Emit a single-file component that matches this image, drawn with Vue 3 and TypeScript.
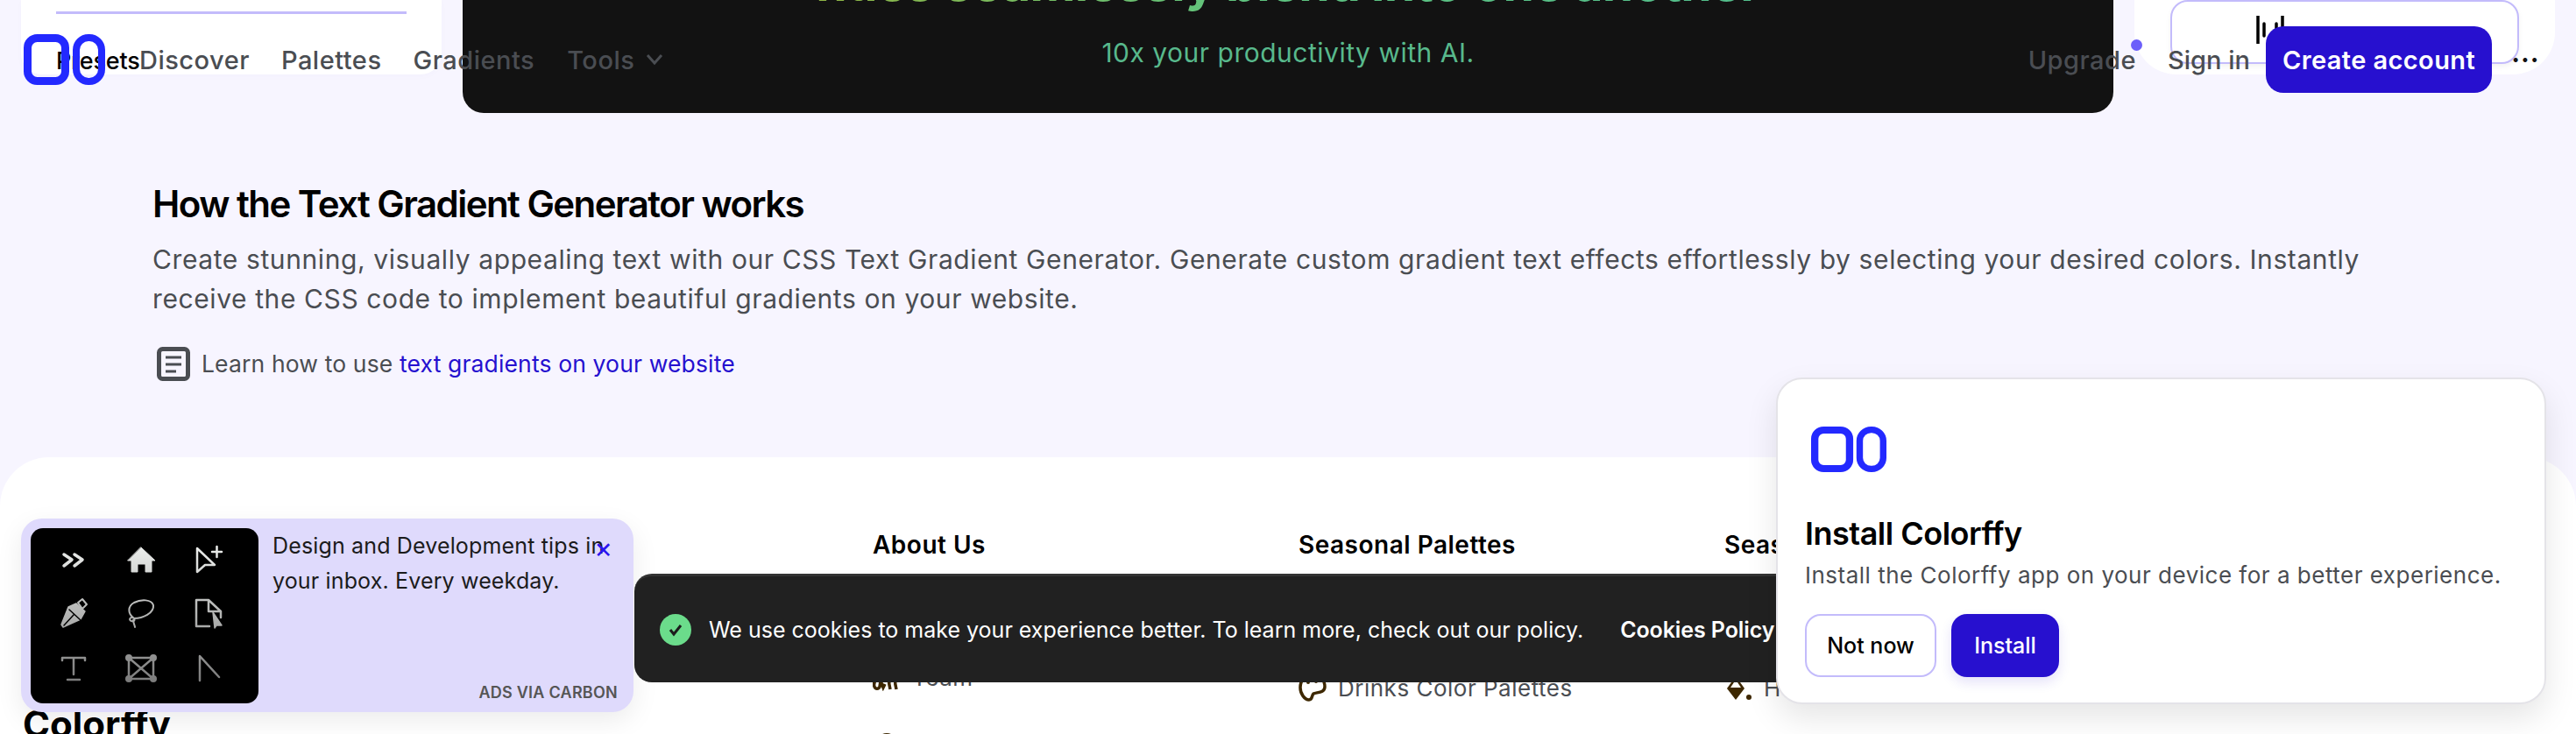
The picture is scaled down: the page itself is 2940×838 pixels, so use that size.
<template>
  <div class="page">
    <div class="top-row">
      <div class="side-card left">
        <div class="divider"></div>
        <span class="presets">Presets</span>
      </div>
      <div class="banner">
        <div class="banner-title">hues seamlessly blend into one another</div>
        <div class="banner-sub">10x your productivity with AI.</div>
      </div>
      <div class="side-card right">
        <button class="outline-btn">
          <svg class="bars" viewBox="0 0 32 32" width="32" height="32">
            <path d="M2 0v32M9 9v14M23 9v14M30 0v22" stroke="#000" stroke-width="3.5" stroke-linecap="round" fill="none" />
          </svg>
          <span>Audio Palette</span>
        </button>
      </div>
    </div>

    <section class="how">
      <h2>How the Text Gradient Generator works</h2>
      <p>
        Create stunning, visually appealing text with our CSS Text Gradient Generator. Generate custom gradient text effects effortlessly by selecting your desired colors. Instantly
        receive the CSS code to implement beautiful gradients on your website.
      </p>
      <div class="learn">
        <svg viewBox="0 0 38 39" width="38" height="39" fill="none" stroke="#4a4d52" stroke-width="5">
          <rect x="2.500" y="2.500" width="33" height="34" rx="4" />
          <path d="M10 12h18M10 20h18M10 28h12" stroke-width="3" />
        </svg>
        <span>Learn how to use <a href="#">text gradients on your website</a></span>
      </div>
    </section>

    <footer class="footer">
      <div class="brand">Colorffy</div>
      <div v-for="col in columns" :key="col.title" class="col" :class="col.cls">
        <h3>{{ col.title }}</h3>
        <ul>
          <li v-for="row in col.rows" :key="row.label">
            <svg viewBox="0 0 32 32" width="32" height="32" v-html="icons[row.icon]"></svg>
            <span>{{ row.label }}</span>
          </li>
        </ul>
      </div>
    </footer>

    <header class="nav">
      <svg viewBox="0 0 93 58" width="93" height="58" fill="none" stroke="#2329ff" stroke-width="9">
        <rect x="4.500" y="4.500" width="43" height="49" rx="11" />
        <rect x="60" y="4" width="29" height="50" rx="14" stroke-width="8" />
      </svg>
      <nav class="links">
        <a v-for="link in links" :key="link" href="#">{{ link }}</a>
        <a href="#" class="tools">
          Tools
          <svg viewBox="0 0 20 14" width="20" height="14" fill="none" stroke="#4a4d52" stroke-width="3">
            <path d="M2 2l8 9 8-9" />
          </svg>
        </a>
      </nav>
      <div class="nav-right">
        <a href="#" class="upgrade">Upgrade<i class="dot"></i></a>
        <a href="#" class="signin">Sign in</a>
        <button class="create">Create account</button>
        <span class="more">···</span>
      </div>
    </header>

    <aside class="ad">
      <div class="ad-image">
        <svg viewBox="0 0 260 200" width="260" height="200" fill="none" stroke="url(#fade)" stroke-width="3" stroke-linecap="round" stroke-linejoin="round">
          <defs>
            <linearGradient id="fade" gradientUnits="userSpaceOnUse" x1="0" y1="20" x2="0" y2="175">
              <stop offset="0" stop-color="#eceeec" />
              <stop offset="1" stop-color="#7c7c7c" />
            </linearGradient>
          </defs>
          <path d="M38 30l9 6-9 7M50 30l9 6-9 7" stroke-width="3.5" />
          <path d="M126 22l16 15h-4v13h-7v-9h-9v9h-7V37h-4z" fill="url(#fade)" stroke-width="1" />
          <path d="M190 23l20 19h-11l-9 8zM207 27h11M212.500 21v12" stroke-width="2.500" />
          <path d="M52 86l-9 4-8 20 2 3 20-9 5-9z" fill="url(#fade)" stroke-width="1.500" />
          <path d="M38 111l11-12M44 93l13 12" stroke="#000" stroke-width="1.500" />
          <path d="M54 85l5-4 5 6-5 5z" stroke-width="2" />
          <path d="M118 103c-8-6-7-14 0-18 8-4 20-4 22 3 1 9-12 15-22 15zM118 103c-4-3-7 2-3 3s4-2 3-3zM117 105c0 3 2 6 2 8" stroke-width="2" />
          <path d="M203 82h-14v30h15M203 82l14 13h-14zM217 95v7" stroke-width="2.500" />
          <path d="M208 96l10 15-6 0-2 3z" fill="url(#fade)" stroke-width="1.500" />
          <path d="M36 151v-3h26v3M49 148v19M42 173h14" stroke-width="2.500" />
          <path d="M112 148h28v24h-28zM112 148l28 24M140 148l-28 24" stroke-width="2.500" />
          <circle cx="112" cy="148" r="2.500" fill="url(#fade)" />
          <circle cx="140" cy="148" r="2.500" fill="url(#fade)" />
          <circle cx="112" cy="172" r="2.500" fill="url(#fade)" />
          <circle cx="140" cy="172" r="2.500" fill="url(#fade)" />
          <path d="M193 174v-28l22 24" stroke-width="2.500" />
        </svg>
      </div>
      <div class="ad-text">Design and Development tips in your inbox. Every weekday.</div>
      <span class="ad-close">×</span>
      <span class="ad-via">ADS VIA CARBON</span>
    </aside>

    <div class="cookie">
      <span class="check">
        <svg viewBox="0 0 20 20" width="20" height="20" fill="none" stroke="#1c1c1c" stroke-width="3">
          <path d="M4 10l4 5 8-10" />
        </svg>
      </span>
      <span class="cookie-text">We use cookies to make your experience better. To learn more, check out our policy.</span>
      <a href="#" class="cookie-link">Cookies Policy</a>
    </div>

    <div class="install">
      <svg class="install-logo" viewBox="0 0 93 58" width="86" height="52" fill="none" stroke="#2329ff" stroke-width="9" preserveAspectRatio="none">
        <rect x="4.500" y="4.500" width="43" height="49" rx="11" />
        <rect x="60" y="4" width="29" height="50" rx="14" stroke-width="8" />
      </svg>
      <h4>Install Colorffy</h4>
      <p>Install the Colorffy app on your device for a better experience.</p>
      <div class="install-actions">
        <button class="later">Not now</button>
        <button class="go">Install</button>
      </div>
    </div>
  </div>
</template>

<script setup lang="ts">
type IconName = 'team' | 'palette' | 'bucket' | 'help'

interface FooterRow {
  label: string
  icon: IconName
}

interface FooterColumn {
  title: string
  cls: string
  rows: FooterRow[]
}

const links = ['Discover', 'Palettes', 'Gradients']

const icons: Record<IconName, string> = {
  team: '<path d="M7 10c-3 8-7 12-5 17 1 3 5 3 6 0l1-7 3 8 2-4M22 10c-3 8-4 11-3 15l1 5M28 10c-2 7-3 11-2 15l1 5" fill="none" stroke="#3d2700" stroke-width="3.500" />',
  palette: '<path d="M16 2C7 2 2 8 2 16c0 7 5 14 10 14 4 0 3-5 5-7 3-2 13 0 13-8C30 7 24 2 16 2z" fill="none" stroke="#3d2700" stroke-width="3.500" /><circle cx="11" cy="10" r="2" fill="#3d2700" /><circle cx="20" cy="9" r="2" fill="#3d2700" />',
  bucket: '<path d="M13 3L3 17l10 13 10-13z" fill="#3d2700" /><path d="M7 16l6-9 6 9z" fill="#fff" /><circle cx="28" cy="27" r="3" fill="#3d2700" />',
  help: '<circle cx="16" cy="16" r="12" fill="#3d2700" />',
}

const columns: FooterColumn[] = [
  {
    title: 'About Us',
    cls: 'about',
    rows: [
      { label: 'Contact', icon: 'help' },
      { label: 'Team', icon: 'team' },
      { label: 'Help & Support', icon: 'help' },
    ],
  },
  {
    title: 'Seasonal Palettes',
    cls: 'seasonal',
    rows: [
      { label: 'Food Color Palettes', icon: 'palette' },
      { label: 'Drinks Color Palettes', icon: 'palette' },
    ],
  },
  {
    title: 'Seasonal Gradients',
    cls: 'seasonal',
    rows: [
      { label: 'Food Gradients', icon: 'bucket' },
      { label: 'Holiday Gradients', icon: 'bucket' },
    ],
  },
]
</script>

<style>
html,
body {
  margin: 0;
  height: 100%;
  overflow: hidden;
  background: #f7f5ff;
}
</style>

<style scoped>
.page {
  position: relative;
  width: 2940px;
  height: 838px;
  overflow: hidden;
  background: #f7f5ff;
  font-family: Inter, "Liberation Sans", sans-serif;
  color: #4a4d52;
}

.top-row {
  display: flex;
  align-items: flex-start;
  gap: 24px;
  height: 129px;
  padding-left: 24px;
}

.side-card {
  height: 85px;
  background: #fff;
  border-radius: 0 0 24px 24px;
  box-sizing: border-box;
}

.side-card.left {
  width: 480px;
  padding: 13px 40px 0;
  box-shadow: 0 2px 8px rgba(40, 20, 160, 0.02);
}

.divider {
  height: 3px;
  background: #c3bbfb;
}

.presets {
  display: block;
  margin-top: 36px;
  font-size: 27px;
  font-weight: 500;
  line-height: 36px;
  letter-spacing: -0.2px;
  color: #000;
}

.side-card.right {
  width: 480px;
  padding: 0 41px;
  border-radius: 0 0 48px 48px;
}

.outline-btn {
  display: flex;
  align-items: flex-start;
  gap: 16px;
  width: 100%;
  height: 73px;
  margin: 0;
  padding: 16px 0 0 96px;
  background: #fff;
  border: 2px solid #c3bbfb;
  border-radius: 20px;
  font: 500 28px/32px Inter, sans-serif;
  color: #000;
  box-sizing: border-box;
  box-shadow: 0 3px 6px rgba(0, 0, 0, 0.05);
}

.outline-btn span {
  margin-top: 8px;
}

.banner {
  width: 1884px;
  height: 129px;
  background: #121212;
  border-radius: 0 0 24px 24px;
  display: flex;
  flex-direction: column;
  align-items: center;
  justify-content: flex-end;
  overflow: hidden;
  padding-bottom: 51px;
  box-sizing: border-box;
}

.banner-title {
  font-size: 57px;
  line-height: 72px;
  font-weight: 700;
  letter-spacing: -0.7px;
  white-space: nowrap;
  background: linear-gradient(90deg, #8fb544, #5fc47f 45%, #52bd8c);
  background-clip: text;
  -webkit-background-clip: text;
  color: transparent;
  margin-bottom: 25px;
}

.banner-sub {
  font-size: 30px;
  line-height: 36px;
  color: #58b98c;
  letter-spacing: 0.5px;
}

.how {
  padding: 81px 174px 0;
}

.how h2 {
  margin: 0;
  font-size: 42px;
  line-height: 46px;
  font-weight: 600;
  letter-spacing: -1.55px;
  color: #000;
}

.how p {
  margin: 18px 0 0;
  font-size: 30px;
  line-height: 45px;
  letter-spacing: 0.6px;
  width: 2600px;
}

.learn {
  display: flex;
  align-items: center;
  gap: 13px;
  margin-top: 32px;
  padding-left: 5px;
  font-size: 26.500px;
  line-height: 39px;
  letter-spacing: 0.14px;
}

.learn a {
  color: #2510cf;
  text-decoration: none;
}

.footer {
  position: relative;
  display: grid;
  grid-template-columns: 970px 486px 486px 1fr;
  align-items: start;
  height: 500px;
  padding: 83px 0 0 26px;
  margin-top: 87px;
  background: #fff;
  border-radius: 56px 56px 0 0;
}

.brand {
  margin-top: 199px;
  font-size: 42px;
  line-height: 46px;
  font-weight: 700;
  letter-spacing: 0;
  color: #000;
}

.col h3 {
  margin: 0;
  font-size: 28px;
  line-height: 34px;
  font-weight: 600;
  letter-spacing: 0.5px;
  color: #000;
}

.col ul {
  list-style: none;
  margin: 0;
  padding: 0;
}

.col li {
  display: flex;
  align-items: center;
  gap: 13px;
  height: 76px;
  font-size: 26px;
  letter-spacing: 0.5px;
}

.about ul {
  padding-top: 20px;
}

.seasonal ul {
  padding-top: 32px;
}

.nav {
  position: absolute;
  top: 30px;
  left: 0;
  right: 0;
  height: 76px;
  display: flex;
  align-items: center;
  padding: 0 29px 0 27px;
  font-size: 29px;
  font-weight: 500;
  letter-spacing: 0.5px;
  color: #4a4d52;
}

.nav a {
  color: inherit;
  text-decoration: none;
}

.links {
  display: flex;
  align-items: center;
  gap: 36px;
  margin-left: 39px;
}

.tools {
  display: flex;
  align-items: center;
  gap: 13px;
  margin-left: 1px;
}

.nav-right {
  margin-left: auto;
  display: flex;
  align-items: center;
}

.upgrade {
  position: relative;
  margin-right: 36px;
}

.dot {
  position: absolute;
  top: -6px;
  right: -7px;
  width: 13px;
  height: 13px;
  border-radius: 50%;
  background: #6c5ffa;
}

.signin {
  margin-right: 18px;
  letter-spacing: 0;
}

.create {
  width: 258px;
  height: 76px;
  padding: 0;
  background: #2710cf;
  border: 0;
  border-radius: 20px;
  color: #fff;
  font: 600 29px/1 Inter, sans-serif;
  letter-spacing: 0.4px;
}

.more {
  width: 45px;
  margin: 0 0 0 22px;
  font-size: 34px;
  line-height: 1;
  color: #111;
}

.ad {
  position: absolute;
  left: 24px;
  top: 592px;
  width: 699px;
  height: 221px;
  padding: 11px 0 0 11px;
  box-sizing: border-box;
  background: #dfdafc;
  border-radius: 24px;
  box-shadow: 0 10px 30px rgba(0, 0, 0, 0.08);
  display: flex;
  gap: 16px;
}

.ad-image {
  width: 260px;
  height: 200px;
  flex: none;
  background: #000;
  border-radius: 14px;
}

.ad-text {
  width: 396px;
  font-size: 25px;
  line-height: 40px;
  color: #1b1b1b;
  letter-spacing: 0.15px;
}

.ad-close {
  position: absolute;
  left: 654px;
  top: 14px;
  color: #2a14f0;
  font-size: 32px;
  line-height: 40px;
}

.ad-via {
  position: absolute;
  right: 18px;
  bottom: 12px;
  font-size: 18px;
  line-height: 20px;
  font-weight: 600;
  letter-spacing: 0.25px;
  color: #555;
}

.cookie {
  position: absolute;
  left: 724px;
  top: 655px;
  width: 1400px;
  height: 124px;
  box-sizing: border-box;
  display: flex;
  align-items: center;
  padding-left: 29px;
  background: #212121;
  border-top: 3px solid #333;
  border-radius: 20px;
  color: #fff;
  font-size: 25px;
}

.check {
  width: 36px;
  height: 36px;
  border-radius: 50%;
  background: #6bdc8b;
  display: flex;
  align-items: center;
  justify-content: center;
}

.cookie-text {
  margin-left: 20px;
  letter-spacing: 0;
  white-space: nowrap;
}

.cookie-link {
  margin-left: 42px;
  color: #fff;
  text-decoration: none;
  font-weight: 600;
  letter-spacing: -0.1px;
  white-space: nowrap;
}

.install {
  position: absolute;
  left: 2027px;
  top: 431px;
  width: 879px;
  height: 373px;
  box-sizing: border-box;
  padding: 54px 31px 0;
  background: #fff;
  border: 2px solid #e4e3e8;
  border-radius: 30px;
  box-shadow: 0 16px 36px rgba(0, 0, 0, 0.1);
}

.install-logo {
  display: block;
  margin-left: 7px;
}

.install h4 {
  margin: 48px 0 0;
  font-size: 36px;
  line-height: 44px;
  font-weight: 600;
  letter-spacing: -0.5px;
  color: #000;
}

.install p {
  margin: 8px 0 0;
  font-size: 26px;
  line-height: 36px;
  letter-spacing: 0.5px;
  white-space: nowrap;
}

.install-actions {
  display: flex;
  gap: 17px;
  margin-top: 26px;
}

.install-actions button {
  height: 72px;
  padding: 0;
  border-radius: 18px;
  font: 500 25px/1 Inter, sans-serif;
}

.later {
  width: 150px;
  background: #fff;
  border: 2px solid #c3bbfb;
  color: #000;
}

.go {
  width: 123px;
  background: #2710cf;
  border: 0;
  color: #fff;
  box-shadow: 0 6px 14px rgba(39, 16, 207, 0.12);
}
</style>
